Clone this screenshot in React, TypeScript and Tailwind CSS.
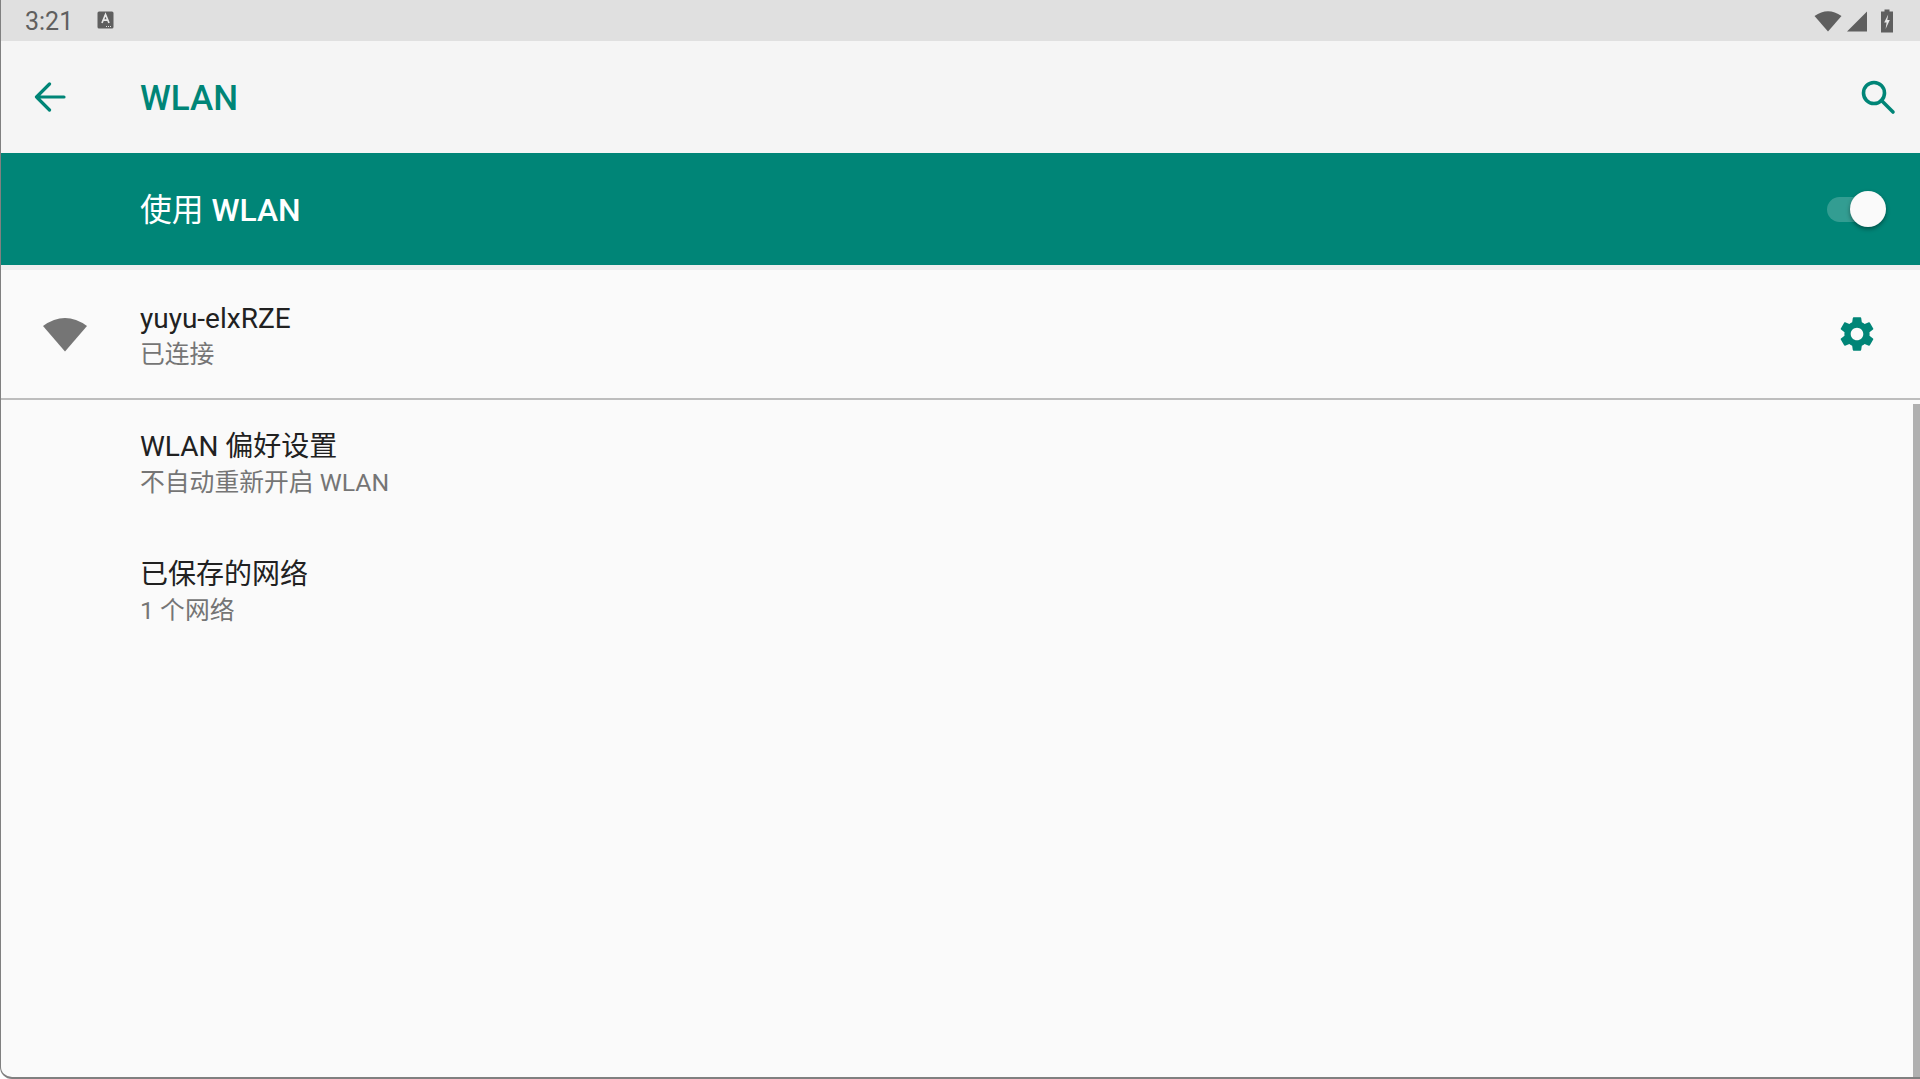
import React from "react";
import { MdSettings } from "react-icons/md";

const font = "font-['Roboto','Noto_Sans_CJK_SC',sans-serif]";

const rows = [
  { title: "WLAN 偏好设置", desc: "不自动重新开启 WLAN" },
  { title: "已保存的网络", desc: "1 个网络" },
];

const RowText = ({ title, desc }: { title: string; desc: string }) => (
  <div className="flex flex-col">
    <div className="text-[28px] leading-[36px] text-[#212121]">{title}</div>
    <div className="text-[24.8px] leading-[35px] text-[#757575]">{desc}</div>
  </div>
);

const StatusBar = () => (
  <div className="flex h-[41px] shrink-0 items-center bg-[#e0e0e0] pl-[24px] pr-[27px] text-[#5f5f5f]">
    <span className="mt-[2px] text-[25px] leading-none">3:21</span>
    <svg className="ml-[24px] -mt-[1px]" width="17" height="18" viewBox="0 0 17 18">
      <rect x="0.5" y="0.5" width="16" height="17" rx="1.5" fill="#5f5f5f" />
      <path d="M5 12 L8.5 3.5 L12 12 M6.2 9.2 H10.8" stroke="#e8e8e8" strokeWidth="1.7" fill="none" />
      <path d="M9 15.5 H14" stroke="#e0e0e0" strokeWidth="1" strokeDasharray="1 1" />
    </svg>
    <div className="ml-auto flex items-center">
      <svg width="28" height="22" viewBox="0 0 28 22">
        <path d="M14 21.5 L0.5 6 Q14 -3.5 27.5 6 Z" fill="#5f5f5f" />
      </svg>
      <svg className="ml-[5px] mt-[1px]" width="20" height="21" viewBox="0 0 20 21">
        <path d="M0 20.5 L20 0.5 V20.5 Z" fill="#5f5f5f" />
      </svg>
      <svg className="ml-[14px]" width="12" height="24" viewBox="0 0 12 24">
        <path d="M3.5 0.5 H8.5 V2.5 H12 V23.5 H0 V2.5 H3.5 Z" fill="#5f5f5f" />
        <path d="M7.2 5.5 L3.2 13.5 H5.6 L4.6 20 L8.8 11 H6.3 Z" fill="#e8e8e8" />
      </svg>
    </div>
  </div>
);

export default function App() {
  return (
    <div className={`${font} relative flex h-[1079px] w-full flex-col overflow-hidden rounded-bl-[12px] border-b-2 border-l border-[#808080] bg-[#fafafa]`}>
      <StatusBar />

      <div className="flex h-[112px] shrink-0 items-center bg-[#f5f5f5] pr-[24px]">
        <svg className="ml-[33px]" width="32" height="30" viewBox="0 0 32 30" fill="none" stroke="#008577" strokeWidth="3.2" strokeLinecap="round" strokeLinejoin="round">
          <path d="M30 15 H2.5 M15.5 2 L2.5 15 L15.5 28" />
        </svg>
        <h1 className="ml-[74px] mt-[2px] text-[35px] font-medium leading-none text-[#008577]">WLAN</h1>
        <svg className="ml-auto" width="36" height="36" viewBox="0 0 36 36" fill="none" stroke="#008577" strokeWidth="3.6" strokeLinecap="round">
          <circle cx="14" cy="14" r="10.5" />
          <path d="M21.5 21.5 L33 33" />
        </svg>
      </div>

      <div className="flex h-[112px] shrink-0 items-center bg-[#008577] pl-[139px] pr-[34px] text-white">
        <span className="mt-[3px] text-[31.8px] leading-none">
          使用 <span className="font-medium">WLAN</span>
        </span>
        <div className="relative ml-auto h-[25px] w-[59px] rounded-full bg-white/20">
          <div className="absolute -top-[5.5px] right-0 h-[36px] w-[36px] rounded-full bg-[#fafafa] shadow-[0_2px_4px_rgba(0,0,0,0.4)]" />
        </div>
      </div>
      <div className="h-[5px] shrink-0 bg-[#eeeeee]" />

      <div className="flex h-[130px] shrink-0 items-center border-b-2 border-[#bdbdbd] pr-[42px]">
        <svg className="ml-[41px] shrink-0" width="46" height="36" viewBox="0 0 45 36">
          <path d="M22.5 35.5 L0.5 10 Q22.5 -6 44.5 10 Z" fill="#757575" />
        </svg>
        <div className="ml-[52px] mt-[5px]">
          <RowText title="yuyu-elxRZE" desc="已连接" />
        </div>
        <MdSettings className="ml-auto text-[#008577]" size={42} />
      </div>

      {rows.map((r, i) => (
        <div key={i} className="flex h-[127.5px] shrink-0 items-center pl-[139px] pt-[2px]">
          <RowText {...r} />
        </div>
      ))}

      <div className="absolute bottom-0 right-0 top-[404px] w-[7px] bg-[#b0b0b0]" />
    </div>
  );
}
